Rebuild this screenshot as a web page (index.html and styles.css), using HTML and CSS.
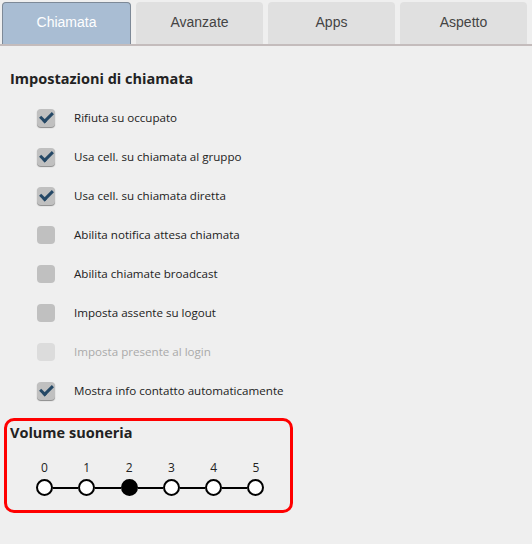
FILE: index.html
```html
<!DOCTYPE html>
<html lang="it">
<head>
<meta charset="UTF-8">
<title>Impostazioni</title>
<link rel="stylesheet" href="styles.css">
</head>
<body>

<div class="tabs">
<div class="tab active">Chiamata</div>
<div class="tab">Avanzate</div>
<div class="tab">Apps</div>
<div class="tab">Aspetto</div>
</div>

<div class="panel">
<h3>Impostazioni di chiamata</h3>

<div class="options">
<div class="option"><span class="box checked"></span>Rifiuta su occupato</div>
<div class="option"><span class="box checked"></span>Usa cell. su chiamata al gruppo</div>
<div class="option"><span class="box checked"></span>Usa cell. su chiamata diretta</div>
<div class="option"><span class="box"></span>Abilita notifica attesa chiamata</div>
<div class="option"><span class="box"></span>Abilita chiamate broadcast</div>
<div class="option"><span class="box"></span>Imposta assente su logout</div>
<div class="option disabled"><span class="box"></span>Imposta presente al login</div>
<div class="option"><span class="box checked"></span>Mostra info contatto automaticamente</div>
</div>

<div class="volume">
<h3>Volume suoneria</h3>
<div class="slider">
<div class="step"><span>0</span><i></i></div>
<div class="step"><span>1</span><i></i></div>
<div class="step on"><span>2</span><i></i></div>
<div class="step"><span>3</span><i></i></div>
<div class="step"><span>4</span><i></i></div>
<div class="step last"><span>5</span><i></i></div>
</div>
</div>
</div>

</body>
</html>
```

FILE: styles.css
```css
body {
margin: 0;
background: #efefef;
font-family: "Open Sans", sans-serif;
color: #222;
}
.tabs {
display: flex;
gap: 5px;
padding: 2px 5px 0 2px;
border-bottom: 2px solid #c4bcbc;
}
.tab {
flex: 1;
height: 42px;
line-height: 40px;
text-align: center;
background: #e0e0e0;
border-radius: 4px 4px 0 0;
font-family: "Liberation Sans", Arial, sans-serif;
font-size: 14px;
color: #444;
}
.tab.active {
background: #a9bdd3;
border: 1px solid #7d8997;
border-bottom: none;
color: #fff;
height: 41px;
line-height: 38px;
}
.panel {
padding: 23px 0 0 4px;
}
h3 {
margin: 0 0 0 6px;
font-size: 14.5px;
font-weight: bold;
line-height: 20px;
}
.options {
padding: 9px 0 0 33px;
}
.option {
display: flex;
align-items: center;
height: 39px;
font-size: 11.6px;
}
.option.disabled {
color: #aaa;
}
.box {
width: 18px;
height: 18px;
border-radius: 4px;
background: #c0c0c0;
margin-right: 19px;
position: relative;
}
.option.disabled .box {
background: #dcdcdc;
}
.box.checked {
box-shadow: 0 1px 1px #8a8a8a;
}
.box.checked::after {
content: "";
position: absolute;
left: 3px;
top: 3px;
width: 10px;
height: 5px;
border-left: 3.5px solid #254866;
border-bottom: 3.5px solid #254866;
transform: rotate(-45deg);
transform-origin: center;
}
.volume {
width: 283px;
height: 89px;
margin-top: 8px;
border: 3px solid #f00;
border-radius: 10px;
}
.volume h3 {
margin: 2px 0 0 3px;
}
.slider {
display: flex;
padding: 17px 0 0 29px;
}
.step {
width: 42.3px;
display: flex;
flex-direction: column;
align-items: flex-start;
position: relative;
}
.step span {
width: 17px;
text-align: center;
font-size: 12px;
line-height: 16px;
}
.step i {
width: 13px;
height: 13px;
margin-top: 3px;
border: 2px solid #000;
border-radius: 50%;
background: #fff;
position: relative;
z-index: 1;
}
.step.on i {
background: #000;
}
.step::after {
content: "";
position: absolute;
left: 17px;
right: 0;
top: 27px;
height: 2px;
background: #000;
}
.step.last::after {
display: none;
}
```
